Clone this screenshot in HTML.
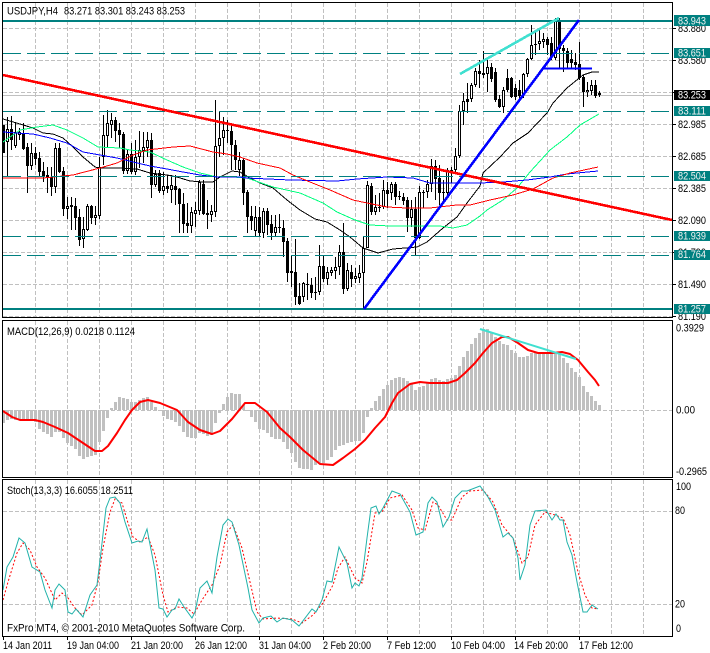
<!DOCTYPE html>
<html lang="en">
<head>
<meta charset="utf-8">
<title>USDJPY,H4</title>
<style>
html,body{margin:0;padding:0;background:#fff;width:710px;height:653px;overflow:hidden}
svg{display:block}
text{font-family:"Liberation Sans",sans-serif;font-size:11px;fill:#000}
.l{fill:#f2f2f2}
</style>
</head>
<body>
<svg width="710" height="653" viewBox="0 0 710 653" xmlns="http://www.w3.org/2000/svg">
<rect width="710" height="653" fill="#fff"/>
<defs><clipPath id="m"><rect x="3" y="3" width="669" height="314"/></clipPath></defs>

<!-- grids -->
<g fill="none" stroke="#c0c0c0" stroke-width="1" stroke-dasharray="4 2" shape-rendering="crispEdges">
<path d="M3 28.5H672M3 60.5H672M3 92.5H672M3 124.5H672M3 156.5H672M3 188.5H672M3 220.5H672M3 252.5H672M3 284.5H672M3 316.5H672"/>
<path d="M35.5 3V317M67.5 3V317M99.5 3V317M131.5 3V317M163.5 3V317M195.5 3V317M227.5 3V317M259.5 3V317M291.5 3V317M323.5 3V317M355.5 3V317M387.5 3V317M419.5 3V317M451.5 3V317M483.5 3V317M515.5 3V317M547.5 3V317M579.5 3V317M611.5 3V317M643.5 3V317"/>
<path d="M35.5 321V477M67.5 321V477M99.5 321V477M131.5 321V477M163.5 321V477M195.5 321V477M227.5 321V477M259.5 321V477M291.5 321V477M323.5 321V477M355.5 321V477M387.5 321V477M419.5 321V477M451.5 321V477M483.5 321V477M515.5 321V477M547.5 321V477M579.5 321V477M611.5 321V477M643.5 321V477"/>
<path d="M3 410.5H672"/>
<path d="M35.5 480V636M67.5 480V636M99.5 480V636M131.5 480V636M163.5 480V636M195.5 480V636M227.5 480V636M259.5 480V636M291.5 480V636M323.5 480V636M355.5 480V636M387.5 480V636M419.5 480V636M451.5 480V636M483.5 480V636M515.5 480V636M547.5 480V636M579.5 480V636M611.5 480V636M643.5 480V636"/>
<path d="M3 511.5H672M3 604.5H672"/>
</g>
<path d="M3 95.5H672" stroke="#c0c0c0" fill="none" shape-rendering="crispEdges"/>

<!-- candles -->
<g clip-path="url(#m)" fill="none" shape-rendering="crispEdges">
<path stroke="#000" stroke-width="1" d="M3.5 125V153M7.5 117V177M11.5 116V150M15.5 123V148M19.5 128V140M23.5 123V150M27.5 143V193M31.5 143V170M35.5 147V165M39.5 152V177M43.5 162V182M47.5 167V193M51.5 167V196M55.5 143V193M59.5 143V173M63.5 167V216M67.5 197V219M71.5 197V230M75.5 198V230M79.5 209V246M83.5 217V248M87.5 204V231M91.5 205V224M95.5 206V225M99.5 157V219M103.5 115V165M107.5 110V147M111.5 113V138M115.5 117V142M119.5 123V148M123.5 132V174M127.5 150V174M131.5 143V174M135.5 140V175M139.5 131V168M143.5 132V163M147.5 132V157M151.5 133V198M155.5 170V187M159.5 170V193M163.5 172V195M167.5 175V193M171.5 175V203M175.5 175V205M179.5 188V233M183.5 193V233M187.5 203V233M191.5 207V233M195.5 202V227M199.5 180V215M203.5 180V215M207.5 200V229M211.5 205V222M215.5 100V217M219.5 112V157M223.5 117V155M227.5 120V143M231.5 125V170M235.5 140V170M239.5 152V176M243.5 158V205M247.5 190V233M251.5 206V230M255.5 206V236M259.5 207V237M263.5 208V238M267.5 208V235M271.5 215V240M275.5 215V237M279.5 214V233M283.5 220V257M287.5 238V282M291.5 256V287M295.5 239V305M299.5 283V305M303.5 282V302M307.5 273V300M311.5 278V298M315.5 277V300M319.5 245V295M323.5 256V282M327.5 267V285M331.5 267V276M335.5 257V279M339.5 245V275M343.5 223V294M347.5 263V291M351.5 265V287M355.5 268V283M359.5 265V283M363.5 237V308M367.5 181V248M371.5 183V215M375.5 195V215M379.5 193V212M383.5 180V209M387.5 182V208M391.5 182V200M395.5 182V205M399.5 191V200M403.5 193V205M407.5 197V232M411.5 200V227M415.5 197V256M419.5 186V239M423.5 190V208M427.5 180V198M431.5 159V192M435.5 160V200M439.5 165V205M443.5 180V203M447.5 168V196M451.5 167V183M455.5 148V173M459.5 105V158M463.5 93V125M467.5 83V113M471.5 83V102M475.5 68V87M479.5 60V88M483.5 51V78M487.5 57V92M491.5 63V82M495.5 68V102M499.5 95V108M503.5 87V113M507.5 69V92M511.5 77V98M515.5 84V100M519.5 80V102M523.5 73V98M527.5 58V77M531.5 25V60M535.5 32V55M539.5 30V50M543.5 33V48M547.5 37V55M551.5 37V60M555.5 18V60M559.5 18V68M563.5 45V72M567.5 48V68M571.5 50V68M575.5 53V70M579.5 42V80M583.5 75V107M587.5 82V97M591.5 80V95M595.5 80V98M599.5 91V97"/>
<path stroke="#000" stroke-width="3" d="M3.5 125V153M7.5 129V142M11.5 129V140M15.5 132V146M19.5 132V135M23.5 133V149M27.5 147V166M31.5 153V166M35.5 153V159M39.5 158V172M43.5 171V177M47.5 175V178M51.5 177V187M55.5 148V187M59.5 148V172M63.5 171V209M67.5 206V209M71.5 205V207M75.5 206V218M79.5 217V240M83.5 229V239M87.5 206V230M91.5 206V218M95.5 215V218M99.5 167V216M103.5 135V157M107.5 123V136M111.5 120V125M115.5 120V131M119.5 130V135M123.5 134V171M127.5 154V171M131.5 154V172M135.5 157V172M139.5 150V157M143.5 147V151M147.5 140V148M151.5 140V185M155.5 174V185M159.5 173V191M163.5 186V191M167.5 186V189M171.5 185V190M175.5 186V190M179.5 189V204M183.5 204V224M187.5 223V226M191.5 212V226M195.5 210V214M199.5 182V211M203.5 184V214M207.5 213V215M211.5 211V215M215.5 146V212M219.5 138V146M223.5 130V138M227.5 130V131M231.5 131V145M235.5 145V160M239.5 160V170M243.5 160V193M247.5 192V217M251.5 216V221M255.5 217V231M259.5 217V233M263.5 211V233M267.5 211V225M271.5 224V233M275.5 227V233M279.5 227V228M283.5 228V242M287.5 241V273M291.5 271V273M295.5 272V297M299.5 296V304M303.5 283V297M307.5 284V285M311.5 285V293M315.5 292V293M319.5 266V292M323.5 266V279M327.5 272V279M331.5 270V273M335.5 267V271M339.5 252V267M343.5 252V289M347.5 270V289M351.5 272V279M355.5 276V279M359.5 273V278M363.5 248V273M367.5 185V248M371.5 186V212M375.5 207V212M379.5 207V208M383.5 190V207M387.5 190V194M391.5 184V193M395.5 184V197M399.5 196V197M403.5 197V201M407.5 200V218M411.5 209V218M415.5 209V238M419.5 192V238M423.5 192V193M427.5 184V192M431.5 166V184M435.5 166V179M439.5 178V193M443.5 192V193M447.5 170V193M451.5 170V171M455.5 156V170M459.5 111V156M463.5 101V111M467.5 99V102M471.5 85V99M475.5 71V85M479.5 71V74M483.5 73V75M487.5 67V74M491.5 67V79M495.5 72V100M499.5 99V107M503.5 90V107M507.5 78V90M511.5 78V97M515.5 88V97M519.5 90V96M523.5 74V95M527.5 59V74M531.5 45V59M535.5 44V45M539.5 41V44M543.5 39V42M547.5 39V45M551.5 43V57M555.5 20V58M559.5 21V49M563.5 48V51M567.5 51V63M571.5 59V63M575.5 62V65M579.5 64V78M583.5 77V92M587.5 90V92M591.5 85V91M595.5 85V96M599.5 93V95"/>
<path stroke="#fff" stroke-width="1" d="M7.5 130V141M15.5 133V145M19.5 133V134M31.5 154V165M55.5 149V186M67.5 207V208M83.5 230V238M87.5 207V229M95.5 216V217M99.5 168V215M103.5 136V156M107.5 124V135M111.5 121V124M127.5 155V170M135.5 158V171M139.5 151V156M143.5 148V150M147.5 141V147M155.5 175V184M163.5 187V190M171.5 186V189M191.5 213V225M195.5 211V213M199.5 183V210M211.5 212V214M215.5 147V211M219.5 139V145M223.5 131V137M239.5 161V169M255.5 218V230M263.5 212V232M275.5 228V232M303.5 284V296M319.5 267V291M327.5 273V278M331.5 271V272M335.5 268V270M339.5 253V266M347.5 271V288M355.5 277V278M359.5 274V277M363.5 249V272M367.5 186V247M375.5 208V211M383.5 191V206M391.5 185V192M411.5 210V217M419.5 193V237M427.5 185V191M431.5 167V183M447.5 171V192M455.5 157V169M459.5 112V155M463.5 102V110M471.5 86V98M475.5 72V84M487.5 68V73M503.5 91V106M523.5 75V94M527.5 60V73M531.5 46V58M539.5 42V43M543.5 40V41M555.5 21V57M587.5 91V91.5M591.5 86V90"/>
</g>

<!-- moving averages -->
<g fill="none" stroke-width="1" clip-path="url(#m)" stroke-linejoin="round" shape-rendering="crispEdges">
<path stroke="#000" d="M3 119L20 124L33 128L43 133L53 134L63 138L72 146L83 157L95 167L99 168L117 168L137 169L150 173L167 175L177 177L190 181L203 182L213 182L220 177L232 171L240 172L250 178L260 183L273 188L287 200L300 210L315 219L327 222L340 230L350 237L363 248L378 253L393 249L417 247L427 242L443 228L457 217L467 203L480 186L483 173L500 157L513 143L528 133L547 113L553 103L567 88L583 75L592 72L599 72"/>
<path stroke="#00ff7f" d="M3 142L20 130L37 127L53 125L67 130L83 138L98 147L120 148L130 150L150 152L167 160L183 167L200 173L217 177L233 177L247 178L273 187L300 193L323 203L337 212L355 220L370 225L390 226L440 226L453 228L467 225L480 216L487 210L503 200L517 188L530 172L550 150L567 137L580 125L599 114"/>
<path stroke="#0000ff" d="M3 132L17 133L33 134L50 138L67 143L83 152L100 155L117 158L133 162L150 166L167 169L183 172L200 175L217 177L240 177L247 178L290 180L337 181L357 179L387 177L413 178L430 183L453 183L480 183L503 182L527 180L550 177L567 174L598 171"/>
<path stroke="#ff0000" d="M3 178L17 178L23 178L43 178L73 175L100 168L117 163L133 155L147 150L173 147L190 146L213 152L227 154L240 157L257 163L280 168L293 175L310 182L330 190L353 200L367 203L387 207L407 208L430 208L457 205L470 205L490 200L513 195L533 189L553 178L570 173L598 167"/>
</g>

<!-- levels -->
<g fill="none" stroke="#008080" shape-rendering="crispEdges">
<path stroke-width="2" d="M3 21H672M3 309H672"/>
<path stroke-width="1" stroke-dasharray="18 6" d="M3 53.5H672M3 111.5H672M3 176.5H672M3 236.5H672M3 255.5H672"/>
</g>

<!-- trend lines -->
<g fill="none" stroke-width="2.6" shape-rendering="crispEdges">
<path stroke="#ff0000" d="M3 75L672 220"/>
<path stroke="#0000ff" d="M364 309L579 20"/>
<path stroke="#0000ff" stroke-width="2" d="M543 68.5H592"/>
<path stroke="#40e0d0" d="M460 74L559 18"/>
</g>

<!-- MACD -->
<path fill="none" stroke="#c0c0c0" stroke-width="3" shape-rendering="crispEdges" d="M3.5 410V423M7.5 410V420M11.5 410V419M15.5 410V420M19.5 410V420M23.5 410V420M27.5 410V420M31.5 410V420M35.5 410V422M39.5 410V429M43.5 410V432M47.5 410V434M51.5 410V437M55.5 410V432M59.5 410V432M63.5 410V438M67.5 410V443M71.5 410V446M75.5 410V449M79.5 410V456M83.5 410V459M87.5 410V457M91.5 410V456M95.5 410V455M99.5 410V442M103.5 410V431M107.5 410V418M111.5 410V408M115.5 410V402M119.5 410V397M123.5 410V398M127.5 410V399M131.5 410V402M135.5 410V402M139.5 410V400M143.5 410V398M147.5 410V397M151.5 410V402M155.5 410V407M159.5 410V411M163.5 410V416M167.5 410V419M171.5 410V420M175.5 410V422M179.5 410V426M183.5 410V432M187.5 410V437M191.5 410V438M195.5 410V438M199.5 410V433M203.5 410V434M207.5 410V436M211.5 410V435M215.5 410V423M219.5 410V413M223.5 410V404M227.5 410V397M231.5 410V393M235.5 410V394M239.5 410V394M243.5 410V405M247.5 410V411M251.5 410V417M255.5 410V422M259.5 410V429M263.5 410V430M267.5 410V433M271.5 410V437M275.5 410V439M279.5 410V439M283.5 410V442M287.5 410V449M291.5 410V453M295.5 410V462M299.5 410V468M303.5 410V469M307.5 410V469M311.5 410V470M315.5 410V465M319.5 410V464M323.5 410V463M327.5 410V460M331.5 410V457M335.5 410V450M339.5 410V446M343.5 410V445M347.5 410V443M351.5 410V442M355.5 410V441M359.5 410V441M363.5 410V433M367.5 410V417M371.5 410V408M375.5 410V401M379.5 410V396M383.5 410V389M387.5 410V385M391.5 410V380M395.5 410V378M399.5 410V377M403.5 410V378M407.5 410V381M411.5 410V383M415.5 410V390M419.5 410V387M423.5 410V386M427.5 410V382M431.5 410V379M435.5 410V378M439.5 410V380M443.5 410V381M447.5 410V379M451.5 410V378M455.5 410V375M459.5 410V366M463.5 410V357M467.5 410V351M471.5 410V344M475.5 410V338M479.5 410V333M483.5 410V329M487.5 410V329M491.5 410V332M495.5 410V337M499.5 410V341M503.5 410V344M507.5 410V345M511.5 410V350M515.5 410V353M519.5 410V357M523.5 410V357M527.5 410V356M531.5 410V353M535.5 410V352M539.5 410V352M543.5 410V353M547.5 410V353M551.5 410V353M555.5 410V353M559.5 410V354M563.5 410V358M567.5 410V363M571.5 410V368M575.5 410V372M579.5 410V377M583.5 410V386M587.5 410V392M591.5 410V396M595.5 410V401M599.5 410V405"/>
<path fill="none" stroke="#ff0000" stroke-width="2" stroke-linejoin="round" d="M3 411L12 417L20 420L35 420L43 422L55 427L68 433L83 443L95 451L102 451L108 446L117 433L125 420L132 410L140 402L148 400L160 403L177 410L188 422L200 430L212 434L220 431L232 419L245 403L255 403L267 412L280 428L290 437L303 450L320 464L333 465L343 458L355 449L365 440L375 428L385 417L392 403L398 393L410 384L420 382L430 383L448 383L457 380L465 373L475 363L483 353L492 343L502 337L508 337L518 343L528 350L538 353L552 353L562 352L570 354L578 360L588 372L595 380L599 386"/>
<path fill="none" stroke="#40e0d0" stroke-width="2" d="M480 329L576 359"/>

<!-- Stochastic -->
<path fill="none" stroke="#ff0000" stroke-width="1" stroke-dasharray="2 2" d="M3 600L8 582L17 553L23 543L30 550L37 567L45 578L55 600L62 593L68 598L75 608L82 615L92 605L98 582L103 548L110 512L115 499L122 503L128 523L133 537L140 542L148 537L155 555L163 595L168 612L177 607L187 608L194 614L202 600L212 585L220 565L227 532L233 525L242 548L250 582L257 612L263 619L277 618L292 619L302 623L313 615L323 603L333 585L338 568L345 557L355 578L362 583L367 562L375 513L382 512L390 498L402 495L412 510L418 528L425 530L433 502L438 505L447 520L452 520L462 497L470 491L483 490L493 502L502 525L513 538L522 563L528 557L535 525L545 512L555 515L563 518L570 535L578 572L585 595L592 608L598 609"/>
<path fill="none" stroke="#20b2aa" stroke-width="1" d="M3 590L7 567L13 557L19 538L25 543L32 567L40 572L45 590L52 608L55 590L59 584L65 590L68 612L72 614L76 609L83 617L90 595L97 585L101 552L106 508L110 498L115 497L120 503L125 522L132 543L138 541L142 542L147 529L155 570L159 608L163 609L167 617L172 610L175 609L179 599L184 607L192 618L195 612L200 588L207 581L212 593L217 557L223 525L228 519L232 522L239 545L248 588L252 610L259 623L263 618L271 616L277 622L283 618L292 620L299 626L312 609L316 612L322 600L327 581L332 582L339 547L347 563L352 588L355 583L359 586L362 578L367 538L371 508L376 506L379 514L383 508L392 491L400 494L410 512L416 535L423 532L428 503L432 497L437 502L443 527L449 517L455 498L462 491L467 491L480 486L488 497L495 510L500 527L503 537L508 533L513 538L518 558L520 580L525 565L530 525L535 511L546 510L552 520L556 514L560 520L563 520L567 542L572 555L577 582L583 612L587 612L592 605L598 609"/>

<!-- frames and ticks -->
<g fill="none" stroke="#000" stroke-width="1" shape-rendering="crispEdges">
<path d="M2.5 2.5H672.5V317.5H2.5Z"/>
<path d="M2.5 320.5H672.5V477.5H2.5Z"/>
<path d="M2.5 479.5H672.5V636.5H2.5Z"/>
<path d="M673 28.5h3M673 60.5h3M673 92.5h3M673 124.5h3M673 156.5h3M673 188.5h3M673 220.5h3M673 252.5h3M673 284.5h3M673 316.5h3"/>
<path d="M3.5 637v3M67.5 637v3M131.5 637v3M195.5 637v3M259.5 637v3M323.5 637v3M387.5 637v3M451.5 637v3M515.5 637v3M579.5 637v3"/>
</g>

<!-- titles -->
<text x="7" y="14.5" textLength="51" lengthAdjust="spacingAndGlyphs">USDJPY,H4</text>
<text x="64" y="14.5" textLength="121" lengthAdjust="spacingAndGlyphs">83.271 83.301 83.243 83.253</text>
<text x="7" y="335" textLength="128" lengthAdjust="spacingAndGlyphs">MACD(12,26,9) 0.0218 0.1124</text>
<text x="7" y="494" textLength="126" lengthAdjust="spacingAndGlyphs">Stoch(13,3,3) 16.6055 18.2511</text>
<text x="7" y="631.5" textLength="238" lengthAdjust="spacingAndGlyphs">FxPro MT4, © 2001-2010 MetaQuotes Software Corp.</text>

<!-- axis labels -->
<text x="678" y="32" textLength="28" lengthAdjust="spacingAndGlyphs">83.880</text>
<text x="678" y="64" textLength="28" lengthAdjust="spacingAndGlyphs">83.580</text>
<text x="678" y="128" textLength="28" lengthAdjust="spacingAndGlyphs">82.985</text>
<text x="678" y="160" textLength="28" lengthAdjust="spacingAndGlyphs">82.685</text>
<text x="678" y="192" textLength="28" lengthAdjust="spacingAndGlyphs">82.385</text>
<text x="678" y="224" textLength="28" lengthAdjust="spacingAndGlyphs">82.090</text>
<text x="678" y="256" textLength="28" lengthAdjust="spacingAndGlyphs">81.790</text>
<text x="678" y="288" textLength="28" lengthAdjust="spacingAndGlyphs">81.490</text>
<text x="678" y="320" textLength="28" lengthAdjust="spacingAndGlyphs">81.190</text>

<g shape-rendering="crispEdges">
<rect x="674" y="15" width="36" height="11" fill="#008080"/>
<rect x="674" y="48" width="36" height="10" fill="#008080"/>
<rect x="674" y="90" width="36" height="10" fill="#000"/>
<rect x="674" y="106" width="36" height="10" fill="#008080"/>
<rect x="674" y="171" width="36" height="10" fill="#008080"/>
<rect x="674" y="231" width="36" height="10" fill="#008080"/>
<rect x="674" y="250" width="36" height="10" fill="#008080"/>
<rect x="674" y="304" width="36" height="10" fill="#008080"/>
</g>
<text class="l" x="678" y="24.5" textLength="28" lengthAdjust="spacingAndGlyphs">83.943</text>
<text class="l" x="678" y="56.5" textLength="28" lengthAdjust="spacingAndGlyphs">83.651</text>
<text x="678" y="98.5" textLength="28" lengthAdjust="spacingAndGlyphs" style="fill:#fff">83.253</text>
<text class="l" x="678" y="114.5" textLength="28" lengthAdjust="spacingAndGlyphs">83.111</text>
<text class="l" x="678" y="179.5" textLength="28" lengthAdjust="spacingAndGlyphs">82.504</text>
<text class="l" x="678" y="239.5" textLength="28" lengthAdjust="spacingAndGlyphs">81.939</text>
<text class="l" x="678" y="258" textLength="28" lengthAdjust="spacingAndGlyphs">81.764</text>
<text class="l" x="678" y="312.5" textLength="28" lengthAdjust="spacingAndGlyphs">81.257</text>

<text x="676" y="331.5" textLength="28" lengthAdjust="spacingAndGlyphs">0.3929</text>
<text x="676" y="413.5" textLength="19" lengthAdjust="spacingAndGlyphs">0.00</text>
<text x="676" y="475" textLength="31" lengthAdjust="spacingAndGlyphs">-0.2965</text>

<text x="676" y="490" textLength="15" lengthAdjust="spacingAndGlyphs">100</text>
<text x="675" y="514" textLength="10" lengthAdjust="spacingAndGlyphs">80</text>
<text x="675" y="607.5" textLength="10" lengthAdjust="spacingAndGlyphs">20</text>
<text x="676" y="632" textLength="5" lengthAdjust="spacingAndGlyphs">0</text>

<!-- time axis -->
<text x="3" y="649" textLength="49" lengthAdjust="spacingAndGlyphs">14 Jan 2011</text>
<text x="67" y="649" textLength="52" lengthAdjust="spacingAndGlyphs">19 Jan 04:00</text>
<text x="131" y="649" textLength="52" lengthAdjust="spacingAndGlyphs">21 Jan 20:00</text>
<text x="195" y="649" textLength="52" lengthAdjust="spacingAndGlyphs">26 Jan 12:00</text>
<text x="259" y="649" textLength="52" lengthAdjust="spacingAndGlyphs">31 Jan 04:00</text>
<text x="323" y="649" textLength="48" lengthAdjust="spacingAndGlyphs">2 Feb 20:00</text>
<text x="387" y="649" textLength="49" lengthAdjust="spacingAndGlyphs">7 Feb 12:00</text>
<text x="451" y="649" textLength="54" lengthAdjust="spacingAndGlyphs">10 Feb 04:00</text>
<text x="514" y="649" textLength="54" lengthAdjust="spacingAndGlyphs">14 Feb 20:00</text>
<text x="579" y="649" textLength="54" lengthAdjust="spacingAndGlyphs">17 Feb 12:00</text>
</svg>
</body>
</html>
